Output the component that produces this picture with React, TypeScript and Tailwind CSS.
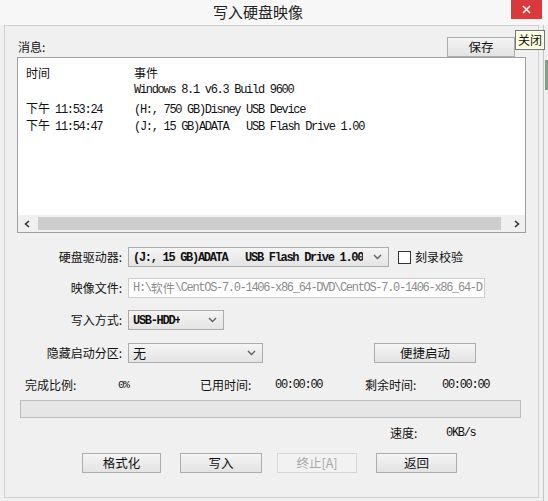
import React from "react";

const MONO = "font-['Liberation_Mono','Noto_Sans_CJK_SC',monospace] tracking-[-1.3px]";

function Chevron() {
  return (
    <svg width="9" height="6" viewBox="0 0 9 6" className="shrink-0">
      <path d="M1 1 L4.5 4.5 L8 1" stroke="#606060" strokeWidth="1.4" fill="none" />
    </svg>
  );
}

function Select({ w, children }: { w: string; children: React.ReactNode }) {
  return (
    <div className={`${w} h-[20px] border border-[#acacac] bg-linear-to-b from-[#f4f4f4] to-[#e4e4e4] flex items-center pl-[4px] pr-[6px] justify-between overflow-hidden`}>
      <div className="whitespace-pre overflow-hidden">{children}</div>
      <Chevron />
    </div>
  );
}

function Btn({ w, children, disabled }: { w: string; children: React.ReactNode; disabled?: boolean }) {
  return (
    <div
      className={
        disabled
          ? `${w} h-[20px] border border-[#d6d6d6] bg-[#f2f2f2] text-[#a8a8a8] flex items-center justify-center text-[12.5px]`
          : `${w} h-[20px] border border-[#adadad] bg-linear-to-b from-[#f4f4f4] to-[#e3e3e3] flex items-center justify-center text-[12.5px]`
      }
    >
      {children}
    </div>
  );
}

function TimeCell({ t }: { t: string }) {
  return (
    <div className="w-[108px] flex items-baseline">
      <span>下午</span>
      <span className={`${MONO} ml-[5px]`}>{t}</span>
    </div>
  );
}

export default function App() {
  return (
    <div className="w-[548px] h-[501px] bg-[#f0f0f0] relative overflow-hidden font-['Noto_Sans_CJK_SC',sans-serif] text-[12px] text-[#111]">
      {/* title bar */}
      <div className="h-[25px] bg-[#f7f7f7] flex">
        <div className="flex-1 flex items-center justify-center pl-[5px] text-[15px] text-[#222]">写入硬盘映像</div>
        <div className="mr-[6px] w-[31px] h-[19px] bg-[#d8393b] flex items-center justify-center">
          <svg width="9" height="9" viewBox="0 0 9 9">
            <path d="M1 1 L8 8 M8 1 L1 8" stroke="#ffffff" strokeWidth="1.6" />
          </svg>
        </div>
      </div>
      <div className="absolute left-[543px] top-[25px] w-[1px] h-[476px] bg-[#c4c4c4]" />
      <div className="absolute left-[545px] top-[60px] w-[3px] h-[30px] bg-[#8a9a8a]" />

      {/* panel */}
      <div className="ml-[4px] w-[535px] h-[473px] border border-[#d0d0d0] bg-[#f0f0f0] flex flex-col">
        <div className="flex items-center justify-between pl-[13px] pr-[23px] pt-[11px]">
          <span>消息:</span>
          <Btn w="w-[68px]">保存</Btn>
        </div>

        {/* list box */}
        <div className="ml-[12px] w-[509px] h-[176px] border border-[#9f9f9f] bg-white flex flex-col">
          <div className="flex-1 pt-[4px] pl-[8px] text-[12px] leading-[17px]">
            <div className="flex h-[20px] items-center">
              <div className="w-[108px]">时间</div>
              <div>事件</div>
            </div>
            <div className="flex h-[17px] items-center">
              <div className="w-[108px]"></div>
              <div className={`${MONO} whitespace-pre`}>Windows 8.1 v6.3 Build 9600</div>
            </div>
            <div className="flex h-[17px] items-baseline">
              <TimeCell t="11:53:24" />
              <div className={`${MONO} whitespace-pre`}>(H:, 750 GB)Disney USB Device</div>
            </div>
            <div className="flex h-[17px] items-baseline">
              <TimeCell t="11:54:47" />
              <div className={`${MONO} whitespace-pre`}>(J:, 15 GB)ADATA   USB Flash Drive 1.00</div>
            </div>
          </div>
          <div className="h-[17px] flex items-center bg-[#f0f0f0]">
            <div className="w-[17px] h-[17px] flex items-center justify-center">
              <svg width="6" height="8" viewBox="0 0 6 8"><path d="M5 1 L1.5 4 L5 7" stroke="#333" strokeWidth="1.6" fill="none" /></svg>
            </div>
            <div className="flex-1 h-[17px] flex items-center pl-[3px] pr-[7px]">
              <div className="w-full h-[13px] bg-[#cdcdcd]" />
            </div>
            <div className="w-[17px] h-[17px] flex items-center justify-center">
              <svg width="6" height="8" viewBox="0 0 6 8"><path d="M1 1 L4.5 4 L1 7" stroke="#333" strokeWidth="1.6" fill="none" /></svg>
            </div>
          </div>
        </div>

        {/* form rows */}
        <div className="flex items-center h-[20px] mt-[14px]">
          <div className="w-[117px] text-right">硬盘驱动器:</div>
          <div className="ml-[6px]">
            <Select w="w-[261px]">
              <span className={`${MONO} font-bold`}>(J:, 15 GB)ADATA   USB Flash Drive 1.00</span>
            </Select>
          </div>
          <div className="ml-[9px] w-[13px] h-[13px] border border-[#333] bg-white" />
          <span className="ml-[4px]">刻录校验</span>
        </div>

        <div className="flex items-center h-[20px] mt-[11px]">
          <div className="w-[117px] text-right">映像文件:</div>
          <div className="ml-[6px] w-[357px] h-[20px] border border-[#cbcbcb] bg-white flex items-center pl-[4px] overflow-hidden whitespace-pre text-[#8c8c8c]">
            <span className={MONO}>H:\</span>
            <span>软件</span>
            <span className={MONO}>\CentOS-7.0-1406-x86_64-DVD\CentOS-7.0-1406-x86_64-D</span>
          </div>
        </div>

        <div className="flex items-center h-[20px] mt-[12px]">
          <div className="w-[117px] text-right">写入方式:</div>
          <div className="ml-[6px]">
            <Select w="w-[96px]">
              <span className={`${MONO} font-bold`}>USB-HDD+</span>
            </Select>
          </div>
        </div>

        <div className="flex items-center h-[20px] mt-[13px]">
          <div className="w-[117px] text-right">隐藏启动分区:</div>
          <div className="ml-[6px]">
            <Select w="w-[135px]">
              <span className="text-[13px]">无</span>
            </Select>
          </div>
          <div className="ml-[111px]">
            <Btn w="w-[102px]">便捷启动</Btn>
          </div>
        </div>

        {/* stats */}
        <div className="flex items-center h-[16px] mt-[14px] pl-[20px]">
          <div className="w-[93px]">完成比例:</div>
          <div className={`w-[82px] ${MONO} text-[11px]`}>0%</div>
          <div className="w-[75px]">已用时间:</div>
          <div className={`w-[90px] ${MONO}`}>00:00:00</div>
          <div className="w-[77px]">剩余时间:</div>
          <div className={MONO}>00:00:00</div>
        </div>

        <div className="ml-[15px] mt-[7px] w-[501px] h-[18px] border border-[#bcbcbc] bg-[#e6e6e6]" />

        <div className="flex items-center h-[16px] mt-[7px] pl-[385px]">
          <div className="w-[56px]">速度:</div>
          <div className={MONO}>0KB/s</div>
        </div>

        <div className="flex items-center mt-[12px] pl-[77px]">
          <Btn w="w-[79px]">格式化</Btn>
          <div className="ml-[19px]"><Btn w="w-[82px]">写入</Btn></div>
          <div className="ml-[15px]"><Btn w="w-[80px]" disabled>终止[A]</Btn></div>
          <div className="ml-[19px]"><Btn w="w-[81px]">返回</Btn></div>
        </div>
      </div>

      {/* tooltip */}
      <div className="absolute left-[515px] top-[30px] h-[20px] border border-[#767676] bg-[#ffffe1] px-[2px] flex items-center text-[12px]">
        关闭
      </div>
    </div>
  );
}
